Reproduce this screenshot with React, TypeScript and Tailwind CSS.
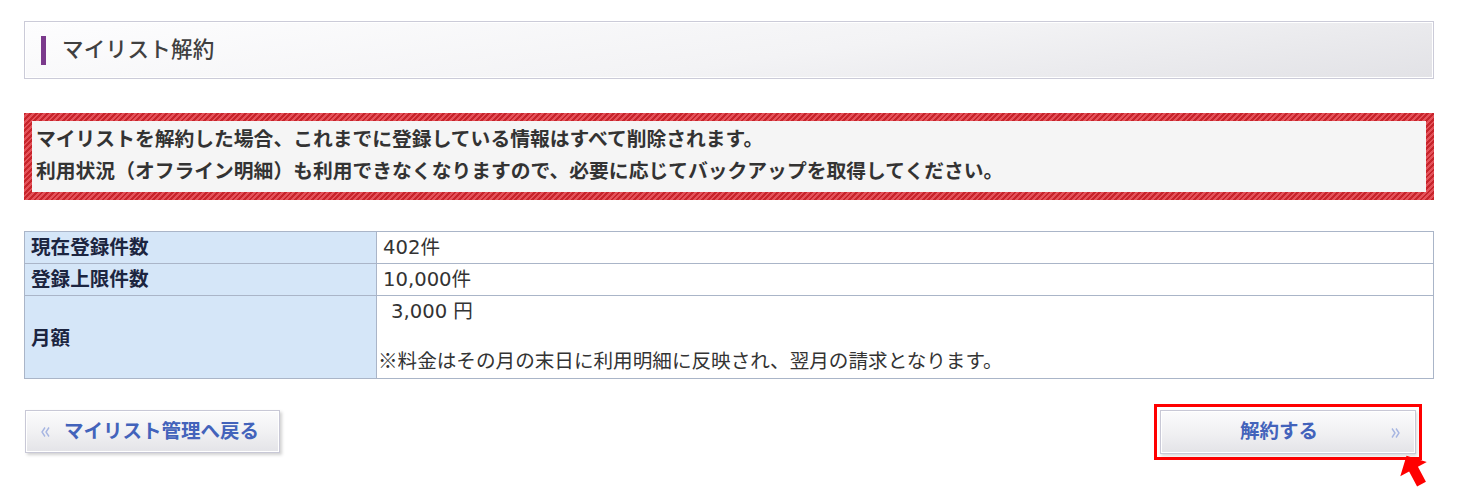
import React from "react";

const FONT = "font-['DejaVu_Sans','Noto_Sans_CJK_JP',sans-serif]";

const rows = [
  { label: "現在登録件数", value: "402件" },
  { label: "登録上限件数", value: "10,000件" },
];

// small double chevron used on the buttons
const Chevrons = ({ dir }: { dir: "left" | "right" }) => (
  <svg width="9" height="12" viewBox="0 0 9 12">
    <g
      fill="none"
      stroke="#a7b6e2"
      strokeWidth="1.4"
      transform={dir === "left" ? "" : "translate(9 0) scale(-1 1)"}
    >
      <polyline points="4,1.5 1,6 4,10.5" />
      <polyline points="8,1.5 5,6 8,10.5" />
    </g>
  </svg>
);

const PointerArrow = () => (
  <svg
    width="34"
    height="34"
    viewBox="0 0 34 34"
    className="absolute right-[-12px] bottom-[-30px]"
  >
    <g transform="rotate(-28 17 17)">
      <polygon
        points="17,1 32,16 22,16 22,33 12,33 12,16 2,16"
        fill="#ff0000"
      />
    </g>
  </svg>
);

export default function App() {
  return (
    <div className={`${FONT} w-[1463px] min-h-[489px] bg-white pl-[24px] pt-[21px]`}>
      <div className="w-[1410px]">
        {/* page heading */}
        <div className="h-[58px] border border-[#cbcbd8] p-px">
          <div className="h-full flex items-center bg-[linear-gradient(172deg,#fdfdfe_0%,#f3f3f5_55%,#e2e2e6_100%)] pl-[15px]">
            <span className="block w-[5px] h-[29px] bg-[#7b3a8c]" />
            <h1 className="ml-[16px] text-[21.5px] font-medium text-[#404040] tracking-[0.3px]">
              マイリスト解約
            </h1>
          </div>
        </div>

        {/* warning */}
        <div className="mt-[34px] p-[8px] bg-[repeating-linear-gradient(135deg,#c7242b_0px,#c7242b_2px,#e4525a_2px,#e4525a_4px)]">
          <div className="h-[71px] bg-[#f5f5f5] pl-[4px] pt-[3px] text-[19.8px] font-bold leading-[32px] text-[#333]">
            <p>マイリストを解約した場合、これまでに登録している情報はすべて削除されます。</p>
            <p>利用状況（オフライン明細）も利用できなくなりますので、必要に応じてバックアップを取得してください。</p>
          </div>
        </div>

        {/* info table */}
        <table className="mt-[31px] w-full border-collapse text-[19.6px] text-[#333]">
          <tbody>
            {rows.map((r) => (
              <tr key={r.label} className="h-[32px]">
                <th className="w-[352px] border border-[#aab5c8] bg-[#d5e6f8] pl-[6px] text-left font-bold text-[#1c2540] leading-[30px]">
                  {r.label}
                </th>
                <td className="border border-[#aab5c8] pl-[6px] leading-[30px]">{r.value}</td>
              </tr>
            ))}
            <tr>
              <th className="w-[352px] border border-[#aab5c8] bg-[#d5e6f8] pl-[6px] pt-[3px] text-left font-bold text-[#1c2540]">
                月額
              </th>
              <td className="border border-[#aab5c8] pl-px pb-px">
                <p className="leading-[32px] pl-[13px]">3,000 円</p>
                <p className="mt-[17px] leading-[30px]">
                  <span className="font-['Noto_Sans_CJK_JP',sans-serif]">※</span>
                  料金はその月の末日に利用明細に反映され、翌月の請求となります。
                </p>
              </td>
            </tr>
          </tbody>
        </table>

        {/* buttons */}
        <div className="mt-[25px] flex items-start justify-between pr-[12px]">
          <button className="mt-[6px] ml-px w-[255px] h-[43px] border border-[#c8c8d6] p-px shadow-[2px_2px_3px_rgba(0,0,0,0.18)]">
            <span className="h-full flex items-center bg-[linear-gradient(180deg,#fbfbfc_0%,#f1f1f3_50%,#e4e4e8_100%)] pl-[14px]">
              <Chevrons dir="left" />
              <span className="ml-[14px] text-[19.5px] font-bold text-[#4363bb]">マイリスト管理へ戻る</span>
            </span>
          </button>

          <div className="relative border-[3px] border-[#ff0000] p-[3px]">
            <button className="w-[256px] h-[44px] border border-[#c8c8d6] p-px shadow-[1px_2px_3px_rgba(0,0,0,0.15)]">
              <span className="relative h-full flex items-center justify-center pr-[18px] bg-[linear-gradient(180deg,#fbfbfc_0%,#f1f1f3_50%,#e4e4e8_100%)]">
                <span className="text-[19.5px] font-bold text-[#4363bb]">解約する</span>
                <span className="absolute right-[14px] top-[15px] flex">
                  <Chevrons dir="right" />
                </span>
              </span>
            </button>
            <PointerArrow />
          </div>
        </div>
      </div>
    </div>
  );
}
